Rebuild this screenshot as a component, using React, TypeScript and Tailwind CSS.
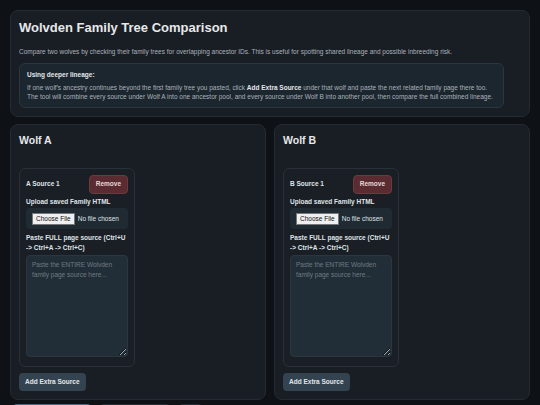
import { useState } from 'react'

function SourceCard({ label }: { label: string }) {
  const [text, setText] = useState('')
  return (
    <div className="w-[116px] rounded-[6px] border border-[#2a3037] bg-[#1a1f25] px-[6px] pb-[9px] pt-[6px]">
      <div className="flex items-center justify-between">
        <span className="text-[6.5px] font-bold text-[#dfe3e7]">{label}</span>
        <button className="h-[19px] rounded-[4px] border border-[#6a3a3f] bg-[#5a2c31] px-[6px] text-[6.5px] font-bold text-[#e4d6d7]">
          Remove
        </button>
      </div>
      <div className="mt-[3px] text-[6.5px] font-bold text-[#dfe3e7]">Upload saved Family HTML</div>
      <div className="mt-[2px] flex h-[21px] items-center rounded-[4px] bg-[#1f2a33] px-[6px]">
        <input
          type="file"
          className="w-full text-[6.5px] text-[#dfe3e7] file:mr-[3px] file:border file:border-[#767676] file:bg-[#efefef] file:px-[3px] file:py-[0px] file:text-[6.5px] file:text-[#111]"
        />
      </div>
      <div className="mt-[4px] text-[6.5px] font-bold leading-[10px] text-[#dfe3e7]">
        Paste FULL page source (Ctrl+U -&gt; Ctrl+A -&gt; Ctrl+C)
      </div>
      <textarea
        value={text}
        onChange={(e) => setText(e.target.value)}
        placeholder="Paste the ENTIRE Wolvden family page source here..."
        className="mt-[2px] block h-[102px] w-full rounded-[4px] border border-[#2b3640] bg-[#222e37] px-[5px] py-[4px] text-[6.5px] leading-[10px] text-[#c9ced3] placeholder:text-[#6f7a84]"
      />
    </div>
  )
}

function WolfPanel({ name, prefix }: { name: string; prefix: string }) {
  return (
    <div className="rounded-[8px] border border-[#252b32] bg-[#191e24] px-[8px] pb-[8px] pt-[8px]">
      <h2 className="text-[10.5px] font-bold leading-[14px] text-[#e6e8ea]">{name}</h2>
      <div className="mt-[21px]">
        <SourceCard label={`${prefix} Source 1`} />
      </div>
      <button className="mt-[5px] h-[18px] rounded-[4px] bg-[#33434f] px-[6px] text-[6.5px] font-bold text-[#e3e7eb]">
        Add Extra Source
      </button>
    </div>
  )
}

export default function App() {
  return (
    <div className="min-h-screen bg-[#0e1216] p-[10px] font-['Liberation_Sans',Arial,sans-serif]">
      <div className="rounded-[8px] border border-[#252b32] bg-[#191e24] px-[8px] pb-[8px] pt-[9px]">
        <h1 className="text-[13px] font-bold leading-[16px] text-[#e6e8ea]">Wolvden Family Tree Comparison</h1>
        <p className="mt-[11px] text-[6.5px] text-[#aab2ba]">
          Compare two wolves by checking their family trees for overlapping ancestor IDs. This is useful for
          spotting shared lineage and possible inbreeding risk.
        </p>
        <div className="mr-[17px] mt-[6px] rounded-[6px] border border-[#2a3640] bg-[#1c262e] px-[7px] pb-[5px] pt-[6px]">
          <div className="text-[6.5px] font-bold text-[#e3e7eb]">Using deeper lineage:</div>
          <p className="mt-[3px] text-[6.5px] leading-[9.5px] text-[#aab2ba]">
            If one wolf's ancestry continues beyond the first family tree you pasted, click{' '}
            <b className="text-[#e3e7eb]">Add Extra Source</b> under that wolf and paste the next related family page
            there too. The tool will combine every source under Wolf A into one ancestor pool, and every source under
            Wolf B into another pool, then compare the full combined lineage.
          </p>
        </div>
      </div>
      <div className="mt-[7px] grid grid-cols-2 gap-[8px]">
        <WolfPanel name="Wolf A" prefix="A" />
        <WolfPanel name="Wolf B" prefix="B" />
      </div>
      <div className="mt-[4px] flex gap-[9px] pl-[3px]">
        <button className="h-[18px] w-[78px] rounded-[4px] bg-[#4a6784]" />
        <button className="h-[18px] w-[70px] rounded-[4px] bg-[#262c33]" />
        <button className="h-[18px] w-[23px] rounded-[4px] bg-[#262c33]" />
      </div>
    </div>
  )
}
